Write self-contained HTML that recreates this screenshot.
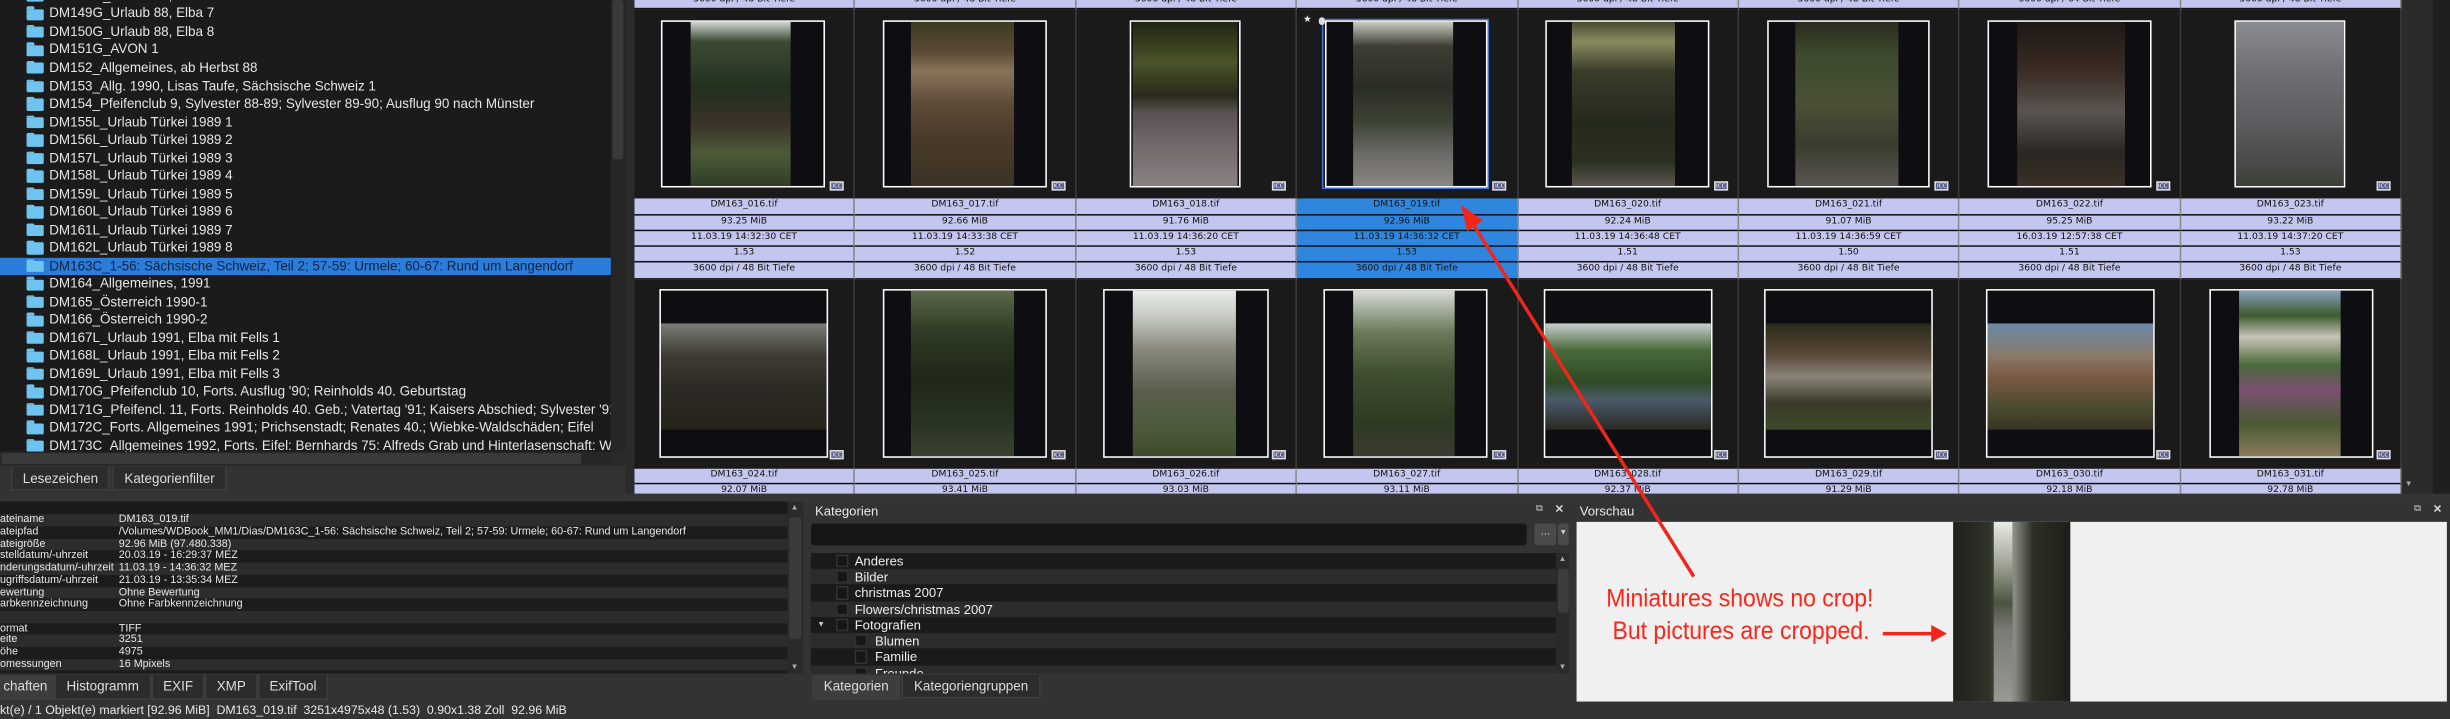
<!DOCTYPE html>
<html><head><meta charset="utf-8">
<style>
html,body{margin:0;padding:0;background:#333;overflow:hidden;width:2450px;height:718px}
#w{position:absolute;left:0;top:0;width:1568px;height:460px;transform:scale(1.5625);transform-origin:0 0;background:#333;font-family:"Liberation Sans",sans-serif;overflow:hidden}
.a{position:absolute}
#tree{left:0;top:0;width:391px;height:289px;background:#1b1b1b;overflow:hidden}
.tr{position:absolute;left:0;width:391px;height:11.5px;color:#e6e6e6;font-size:8.6px;line-height:11.5px;white-space:nowrap}
.tr span{position:absolute;left:31.5px}
.tr i{position:absolute;left:17px;top:2.3px;width:10.5px;height:7.2px;background:#6ec3ef;border-radius:0 1px 1px 1px}
.tr i:before{content:"";position:absolute;left:0;top:-1.3px;width:4.5px;height:1.5px;background:#6ec3ef;border-radius:1px 1px 0 0}
.tr.sel{background:#2b7dd9;color:#0c2345}
.tab{position:absolute;height:15px;background:#2c2c2c;border:1px solid #3e3e3e;border-top:none;color:#ddd;font-size:8.6px;line-height:15px;text-align:center;box-sizing:border-box}
.tab.on{background:#3d3d3d}
#grid{left:406px;top:0;width:1131px;height:315.5px;background:#1a1a1a;overflow:hidden}
.row{position:absolute;left:0;width:1131px;display:flex}
.row div{width:141.375px;box-sizing:border-box;border-right:1px solid #8a8a8a;text-align:center}
.info div{height:10.24px;background:#c3c6ee;border-bottom:1px solid #111;color:#111;font-family:"DejaVu Sans",sans-serif;font-size:5.9px;line-height:9.5px;white-space:nowrap;overflow:hidden}
.info div.s{background:#2f86de}
.th div{height:121px;border-right:1px solid #3a3a3a}
.fr{position:absolute;border:1.3px solid #fff;background:#0e0e12;box-sizing:border-box;overflow:hidden}
.fr b{position:absolute;display:block}
.icc{position:absolute;width:9px;height:6px;background:#5a5e8c;border:0.7px solid #ddd;box-sizing:border-box;color:#fff;font-size:3.6px;line-height:5px;text-align:center;font-family:"DejaVu Sans",sans-serif}
#props{left:0;top:321px;width:504px;height:110px;background:#1c1c1c;overflow:hidden}
.pr{position:absolute;left:0;width:504px;height:7.7px;font-size:6.9px;line-height:7.7px;color:#e8e8e8;white-space:nowrap}
.pr span{position:absolute;left:76px}
.pr.l{background:#2c2c2c}
.sb{position:absolute;background:#2a2a2a}
.cr{position:absolute;left:519px;width:477px;height:10.24px;color:#eee;font-size:8.4px;line-height:10.24px}
.cr.l{background:#2c2c2c}
.cr.d{background:#1a1a1a}
.cb{position:absolute;top:1px;width:8px;height:8.2px;background:#161616;border:0.5px solid #333;box-sizing:border-box}
</style></head><body><div id="w">

<!-- tree -->
<div id="tree" class="a">
<div class="tr" style="top:-8.1px"><i></i><span>DM148G_Urlaub 88, Elba 6</span></div>
<div class="tr" style="top:3.44px"><i></i><span>DM149G_Urlaub 88, Elba 7</span></div>
<div class="tr" style="top:14.96px"><i></i><span>DM150G_Urlaub 88, Elba 8</span></div>
<div class="tr" style="top:26.48px"><i></i><span>DM151G_AVON 1</span></div>
<div class="tr" style="top:38px"><i></i><span>DM152_Allgemeines, ab Herbst 88</span></div>
<div class="tr" style="top:49.52px"><i></i><span>DM153_Allg. 1990, Lisas Taufe, Sächsische Schweiz 1</span></div>
<div class="tr" style="top:61.04px"><i></i><span>DM154_Pfeifenclub 9, Sylvester 88-89; Sylvester 89-90; Ausflug 90 nach Münster</span></div>
<div class="tr" style="top:72.56px"><i></i><span>DM155L_Urlaub Türkei 1989 1</span></div>
<div class="tr" style="top:84.08px"><i></i><span>DM156L_Urlaub Türkei 1989 2</span></div>
<div class="tr" style="top:95.6px"><i></i><span>DM157L_Urlaub Türkei 1989 3</span></div>
<div class="tr" style="top:107.12px"><i></i><span>DM158L_Urlaub Türkei 1989 4</span></div>
<div class="tr" style="top:118.64px"><i></i><span>DM159L_Urlaub Türkei 1989 5</span></div>
<div class="tr" style="top:130.16px"><i></i><span>DM160L_Urlaub Türkei 1989 6</span></div>
<div class="tr" style="top:141.68px"><i></i><span>DM161L_Urlaub Türkei 1989 7</span></div>
<div class="tr" style="top:153.2px"><i></i><span>DM162L_Urlaub Türkei 1989 8</span></div>
<div class="tr sel" style="top:164.72px"><i></i><span>DM163C_1-56: Sächsische Schweiz, Teil 2; 57-59: Urmele; 60-67: Rund um Langendorf</span></div>
<div class="tr" style="top:176.24px"><i></i><span>DM164_Allgemeines, 1991</span></div>
<div class="tr" style="top:187.76px"><i></i><span>DM165_Österreich 1990-1</span></div>
<div class="tr" style="top:199.28px"><i></i><span>DM166_Österreich 1990-2</span></div>
<div class="tr" style="top:210.8px"><i></i><span>DM167L_Urlaub 1991, Elba mit Fells 1</span></div>
<div class="tr" style="top:222.32px"><i></i><span>DM168L_Urlaub 1991, Elba mit Fells 2</span></div>
<div class="tr" style="top:233.84px"><i></i><span>DM169L_Urlaub 1991, Elba mit Fells 3</span></div>
<div class="tr" style="top:245.36px"><i></i><span>DM170G_Pfeifenclub 10, Forts. Ausflug '90; Reinholds 40. Geburtstag</span></div>
<div class="tr" style="top:256.88px"><i></i><span>DM171G_Pfeifencl. 11, Forts. Reinholds 40. Geb.; Vatertag '91; Kaisers Abschied; Sylvester '91</span></div>
<div class="tr" style="top:268.4px"><i></i><span>DM172C_Forts. Allgemeines 1991; Prichsenstadt; Renates 40.; Wiebke-Waldschäden; Eifel</span></div>
<div class="tr" style="top:279.92px"><i></i><span>DM173C_Allgemeines 1992, Forts. Eifel: Bernhards 75: Alfreds Grab und Hinterlasenschaft: Wa</span></div>
</div>
<div class="sb" style="left:391px;top:0;width:9px;height:289px;background:#262626"></div>
<div class="sb" style="left:392px;top:0;width:7px;height:102px;background:#3a3a3a;border-radius:2px"></div>
<div class="sb" style="left:0;top:289px;width:400px;height:9px;background:#262626"></div>
<div class="sb" style="left:1px;top:290px;width:448px;max-width:448px;height:7px;background:#3a3a3a;width:448px"></div>
<div class="sb" style="left:372px;top:289px;width:28px;height:9px;background:#262626"></div>
<div class="a" style="left:391px;top:289px;width:9px;height:9px;background:#2a2a2a"></div>
<div class="a" style="left:400px;top:0;width:6px;height:316px;background:#2b2b2b"></div>
<div class="tab" style="left:7.4px;top:299px;width:62.6px">Lesezeichen</div>
<div class="tab" style="left:72px;top:299px;width:73px">Kategorienfilter</div>

<!-- grid -->
<div id="grid" class="a">
<div class="row info" style="top:-3.84px"><div>3600 dpi / 48 Bit Tiefe</div><div>3600 dpi / 48 Bit Tiefe</div><div>3600 dpi / 48 Bit Tiefe</div><div>3600 dpi / 48 Bit Tiefe</div><div>3600 dpi / 48 Bit Tiefe</div><div>3600 dpi / 48 Bit Tiefe</div><div>3600 dpi / 64 Bit Tiefe</div><div>3600 dpi / 48 Bit Tiefe</div></div>
<div class="row th" style="top:6.4px"><div></div><div></div><div></div><div></div><div></div><div></div><div></div><div></div></div>
<div class="row info" style="top:127.4px"><div>DM163_016.tif</div><div>DM163_017.tif</div><div>DM163_018.tif</div><div class="s">DM163_019.tif</div><div>DM163_020.tif</div><div>DM163_021.tif</div><div>DM163_022.tif</div><div>DM163_023.tif</div></div>
<div class="row info" style="top:137.64px"><div>93.25 MiB</div><div>92.66 MiB</div><div>91.76 MiB</div><div class="s">92.96 MiB</div><div>92.24 MiB</div><div>91.07 MiB</div><div>95.25 MiB</div><div>93.22 MiB</div></div>
<div class="row info" style="top:147.88px"><div>11.03.19 14:32:30 CET</div><div>11.03.19 14:33:38 CET</div><div>11.03.19 14:36:20 CET</div><div class="s">11.03.19 14:36:32 CET</div><div>11.03.19 14:36:48 CET</div><div>11.03.19 14:36:59 CET</div><div>16.03.19 12:57:38 CET</div><div>11.03.19 14:37:20 CET</div></div>
<div class="row info" style="top:158.12px"><div>1.53</div><div>1.52</div><div>1.53</div><div class="s">1.53</div><div>1.51</div><div>1.50</div><div>1.51</div><div>1.53</div></div>
<div class="row info" style="top:168.36px"><div>3600 dpi / 48 Bit Tiefe</div><div>3600 dpi / 48 Bit Tiefe</div><div>3600 dpi / 48 Bit Tiefe</div><div class="s">3600 dpi / 48 Bit Tiefe</div><div>3600 dpi / 48 Bit Tiefe</div><div>3600 dpi / 48 Bit Tiefe</div><div>3600 dpi / 48 Bit Tiefe</div><div>3600 dpi / 48 Bit Tiefe</div></div>
<div class="row th" style="top:178.6px"><div></div><div></div><div></div><div></div><div></div><div></div><div></div><div></div></div>
<div class="row info" style="top:299.6px"><div>DM163_024.tif</div><div>DM163_025.tif</div><div>DM163_026.tif</div><div>DM163_027.tif</div><div>DM163_028.tif</div><div>DM163_029.tif</div><div>DM163_030.tif</div><div>DM163_031.tif</div></div>
<div class="row info" style="top:309.84px"><div>92.07 MiB</div><div>93.41 MiB</div><div>93.03 MiB</div><div>93.11 MiB</div><div>92.37 MiB</div><div>91.29 MiB</div><div>92.18 MiB</div><div>92.78 MiB</div></div>

<!-- row1 thumbs -->
<div class="fr" style="left:17px;top:12.8px;width:105px;height:107px"><b style="left:17%;width:63%;top:0;height:100%;background:linear-gradient(180deg,#cfd6d0 0%,#3c4a34 12%,#22301f 40%,#3a3226 62%,#4d5b3a 80%,#2f3d27 100%)"></b></div>
<div class="fr" style="left:158.5px;top:12.8px;width:105px;height:107px"><b style="left:17%;width:64%;top:0;height:100%;background:linear-gradient(180deg,#3e3a22 0%,#5a4a34 18%,#8a735a 30%,#5d4b38 50%,#4a3a2a 70%,#3b3324 100%)"></b></div>
<div class="fr" style="left:317px;top:12.8px;width:71px;height:107px"><b style="left:2%;width:96%;top:0;height:100%;background:linear-gradient(180deg,#1f2516 0%,#4a5428 25%,#2a2a1c 45%,#5a5250 55%,#70686a 75%,#8a8280 100%)"></b></div>
<div class="a" style="left:440px;top:11.8px;width:107px;height:109.5px;border:1px solid #3f72d2;box-sizing:border-box"></div>
<div class="fr" style="left:441.5px;top:13.3px;width:104px;height:106.5px"><b style="left:17%;width:63%;top:0;height:100%;background:linear-gradient(180deg,#c8ccc0 0%,#3d3d33 15%,#2b2d25 40%,#3a4232 60%,#6a6a66 80%,#8a8682 100%)"></b></div>
<div class="a" style="left:428px;top:8.5px;color:#eee;font-size:6px">★</div>
<div class="a" style="left:437.5px;top:10.5px;width:4.5px;height:5px;border-radius:50%;background:#ddd"></div>
<div class="fr" style="left:583px;top:12.8px;width:105px;height:107px"><b style="left:16%;width:64%;top:0;height:100%;background:linear-gradient(180deg,#4a4a30 0%,#8a8a60 12%,#3a3c2a 30%,#26291d 60%,#2a3020 85%,#5c5650 100%)"></b></div>
<div class="fr" style="left:725px;top:12.8px;width:104px;height:107px"><b style="left:17%;width:64%;top:0;height:100%;background:linear-gradient(180deg,#2a2a1c 0%,#3c4a2e 20%,#4a5036 50%,#3a3c2e 75%,#5a5650 100%)"></b></div>
<div class="fr" style="left:866px;top:12.8px;width:105px;height:107px"><b style="left:17%;width:67%;top:0;height:100%;background:linear-gradient(180deg,#1e1814 0%,#3a2c24 30%,#5a5450 55%,#2a2622 80%,#3a3026 100%)"></b></div>
<div class="fr" style="left:1024px;top:12.8px;width:71px;height:107px"><b style="left:0;width:100%;top:0;height:100%;background:linear-gradient(180deg,#8a8c92 0%,#6e7076 30%,#5c5e60 60%,#4a4c4a 85%,#3a4034 100%)"></b></div>

<!-- row2 thumbs -->
<div class="fr" style="left:16px;top:185px;width:108px;height:107.5px"><b style="left:0;width:100%;top:20%;height:64%;background:linear-gradient(180deg,#7a7c78 0%,#3e3c34 30%,#2c2a24 60%,#26231c 100%)"></b></div>
<div class="fr" style="left:158.5px;top:185px;width:105px;height:107.5px"><b style="left:17%;width:64%;top:0;height:100%;background:linear-gradient(180deg,#5a6a4a 0%,#2e3a24 25%,#202818 55%,#2a3424 80%,#3a4030 100%)"></b></div>
<div class="fr" style="left:300px;top:185px;width:105.5px;height:107.5px"><b style="left:17%;width:64%;top:0;height:100%;background:linear-gradient(180deg,#e8ecea 0%,#c8ccc4 15%,#8a8a7e 35%,#5a5e4c 60%,#4a5a3a 85%,#3a4a2c 100%)"></b></div>
<div class="fr" style="left:441px;top:185px;width:105px;height:107.5px"><b style="left:17%;width:64%;top:0;height:100%;background:linear-gradient(180deg,#d8dcd6 0%,#6a7a5a 25%,#3e4e30 50%,#2e3a22 80%,#3a3a30 100%)"></b></div>
<div class="fr" style="left:582px;top:185px;width:108px;height:107.5px"><b style="left:0;width:100%;top:20%;height:64%;background:linear-gradient(180deg,#cacfcf 0%,#4a6a3a 25%,#2e4a26 55%,#4a5a6a 72%,#2a2a22 100%)"></b></div>
<div class="fr" style="left:723px;top:185px;width:108px;height:107.5px"><b style="left:0;width:100%;top:20%;height:64%;background:linear-gradient(180deg,#2a2a1a 0%,#5a4a3a 30%,#8a8478 50%,#3a3a28 75%,#3e4a2a 100%)"></b></div>
<div class="fr" style="left:865px;top:185px;width:108px;height:107.5px"><b style="left:0;width:100%;top:20%;height:64%;background:linear-gradient(180deg,#6a8aa8 0%,#8a7a6a 30%,#7a5a44 50%,#4a4a30 80%,#3a3424 100%)"></b></div>
<div class="fr" style="left:1008px;top:185px;width:105px;height:107.5px"><b style="left:17%;width:64%;top:0;height:100%;background:linear-gradient(180deg,#8aa0c0 0%,#3e5a2e 15%,#c8c4b8 28%,#4a6a3a 45%,#7a5070 60%,#4a5a34 80%,#8a7a5a 100%)"></b></div>

<!-- ICC badges -->
<div class="icc" style="left:125.3px;top:115.8px">ICC</div><div class="icc" style="left:266.7px;top:115.8px">ICC</div><div class="icc" style="left:408px;top:115.8px">ICC</div><div class="icc" style="left:549.4px;top:115.8px">ICC</div><div class="icc" style="left:690.8px;top:115.8px">ICC</div><div class="icc" style="left:832.2px;top:115.8px">ICC</div><div class="icc" style="left:973.6px;top:115.8px">ICC</div><div class="icc" style="left:1115px;top:115.8px">ICC</div>
<div class="icc" style="left:125.3px;top:287.8px">ICC</div><div class="icc" style="left:266.7px;top:287.8px">ICC</div><div class="icc" style="left:408px;top:287.8px">ICC</div><div class="icc" style="left:549.4px;top:287.8px">ICC</div><div class="icc" style="left:690.8px;top:287.8px">ICC</div><div class="icc" style="left:832.2px;top:287.8px">ICC</div><div class="icc" style="left:973.6px;top:287.8px">ICC</div><div class="icc" style="left:1115px;top:287.8px">ICC</div>
</div>
<div class="a" style="left:1537px;top:0;width:20px;height:316px;background:#2b2b2b"></div>
<div class="a" style="left:1557px;top:0;width:11px;height:316px;background:#1f1f1f"></div>
<div class="a" style="left:1539px;top:307px;width:6px;height:7px;color:#aaa;font-size:5px">▼</div>
<div class="a" style="left:400px;top:315.5px;width:1168px;height:5px;background:#353535"></div>

<!-- properties -->
<div id="props" class="a">
<div class="pr" style="top:0;background:#1a1a1a;height:8.3px"></div>
<div class="pr l" style="top:8.3px">ateiname<span>DM163_019.tif</span></div>
<div class="pr" style="top:16px">ateipfad<span>/Volumes/WDBook_MM1/Dias/DM163C_1-56: Sächsische Schweiz, Teil 2; 57-59: Urmele; 60-67: Rund um Langendorf</span></div>
<div class="pr l" style="top:23.7px">ateigröße<span>92.96 MiB (97.480.338)</span></div>
<div class="pr" style="top:31.4px">stelldatum/-uhrzeit<span>20.03.19 - 16:29:37 MEZ</span></div>
<div class="pr l" style="top:39.1px">nderungsdatum/-uhrzeit<span>11.03.19 - 14:36:32 MEZ</span></div>
<div class="pr" style="top:46.8px">ugriffsdatum/-uhrzeit<span>21.03.19 - 13:35:34 MEZ</span></div>
<div class="pr l" style="top:54.5px">ewertung<span>Ohne Bewertung</span></div>
<div class="pr" style="top:62.2px">arbkennzeichnung<span>Ohne Farbkennzeichnung</span></div>
<div class="pr l" style="top:69.9px"></div>
<div class="pr" style="top:77.6px">ormat<span>TIFF</span></div>
<div class="pr l" style="top:85.3px">eite<span>3251</span></div>
<div class="pr" style="top:93px">öhe<span>4975</span></div>
<div class="pr l" style="top:100.7px">omessungen<span>16 Mpixels</span></div>
<div class="pr" style="top:108.4px">...</div>
</div>
<div class="sb" style="left:504px;top:321px;width:10px;height:110px"></div>
<div class="sb" style="left:505px;top:331px;width:8px;height:78px;background:#3a3a3a;border-radius:2px"></div>
<div class="a" style="left:506px;top:322px;color:#aaa;font-size:5px">▲</div>
<div class="a" style="left:506px;top:424px;color:#aaa;font-size:5px">▼</div>
<div class="tab on" style="left:-2px;top:432px;width:36.5px;height:16px">chaften</div>
<div class="tab" style="left:34.5px;top:432px;width:62.5px;height:16px">Histogramm</div>
<div class="tab" style="left:97px;top:432px;width:34px;height:16px">EXIF</div>
<div class="tab" style="left:131px;top:432px;width:34px;height:16px">XMP</div>
<div class="tab" style="left:165px;top:432px;width:45px;height:16px">ExifTool</div>
<div class="a" style="left:0;top:449px;font-size:7.9px;color:#e8e8e8;white-space:nowrap;line-height:11px">kt(e) / 1 Objekt(e) markiert [92.96 MiB]&nbsp;&nbsp;DM163_019.tif&nbsp;&nbsp;3251x4975x48 (1.53)&nbsp;&nbsp;0.90x1.38 Zoll&nbsp;&nbsp;92.96 MiB</div>

<!-- Kategorien -->
<div class="a" style="left:521.6px;top:322px;color:#e8e8e8;font-size:8.4px;line-height:11px">Kategorien</div>
<div class="a" style="left:983px;top:323px;color:#ccc;font-size:6px">⧉</div>
<div class="a" style="left:995px;top:322px;color:#ddd;font-size:7px;font-weight:bold">✕</div>
<div class="a" style="left:519px;top:334.5px;width:458px;height:14.5px;background:#161616;border-radius:2px"></div>
<div class="a" style="left:982px;top:335px;width:14px;height:14px;background:#4a4a4a;border-radius:2px;color:#ddd;font-size:7px;text-align:center;line-height:12px">...</div>
<div class="a" style="left:997px;top:335px;width:7px;height:14px;background:#4a4a4a;border-radius:2px;color:#ccc;font-size:5px;text-align:center;line-height:12px">▼</div>
<div class="a" style="left:519px;top:354px;width:485px;height:77px;background:#1a1a1a;overflow:hidden">
<div class="cr d" style="left:0;top:0"><div class="cb" style="left:16px"></div><span style="position:absolute;left:28px">Anderes</span></div>
<div class="cr l" style="left:0;top:10.24px"><div class="cb" style="left:16px"></div><span style="position:absolute;left:28px">Bilder</span></div>
<div class="cr d" style="left:0;top:20.48px"><div class="cb" style="left:16px"></div><span style="position:absolute;left:28px">christmas 2007</span></div>
<div class="cr l" style="left:0;top:30.72px"><div class="cb" style="left:16px"></div><span style="position:absolute;left:28px">Flowers/christmas 2007</span></div>
<div class="cr d" style="left:0;top:40.96px"><span style="position:absolute;left:4px;font-size:5px;color:#ccc">▼</span><div class="cb" style="left:16px"></div><span style="position:absolute;left:28px">Fotografien</span></div>
<div class="cr l" style="left:0;top:51.2px"><div class="cb" style="left:28px"></div><span style="position:absolute;left:41px">Blumen</span></div>
<div class="cr d" style="left:0;top:61.44px"><div class="cb" style="left:28px"></div><span style="position:absolute;left:41px">Familie</span></div>
<div class="cr l" style="left:0;top:71.68px"><div class="cb" style="left:28px"></div><span style="position:absolute;left:41px">Freunde</span></div>
</div>
<div class="sb" style="left:996px;top:354px;width:8px;height:77px;background:#2a2a2a"></div>
<div class="sb" style="left:996.5px;top:364px;width:7px;height:28px;background:#3c3c3c;border-radius:2px"></div>
<div class="a" style="left:997.5px;top:355px;color:#aaa;font-size:5px">▲</div>
<div class="a" style="left:997.5px;top:424px;color:#aaa;font-size:5px">▼</div>
<div class="tab on" style="left:520px;top:432px;width:56px;height:16px">Kategorien</div>
<div class="tab" style="left:577px;top:432px;width:89px;height:15px">Kategoriengruppen</div>

<!-- Vorschau -->
<div class="a" style="left:1011px;top:322px;color:#e8e8e8;font-size:8.4px;line-height:11px">Vorschau</div>
<div class="a" style="left:1545px;top:323px;color:#ccc;font-size:6px">⧉</div>
<div class="a" style="left:1557px;top:322px;color:#ddd;font-size:7px;font-weight:bold">✕</div>
<div class="a" style="left:1008.6px;top:334px;width:557px;height:115px;background:#f0f0f0"></div>
<div class="a" style="left:1250px;top:334px;width:75px;height:115px;background:linear-gradient(90deg,#221f1c 0%,#2e3226 30%,#5a6450 45%,#8a8e86 52%,#2c3024 68%,#1e1e1a 100%)"></div>
<div class="a" style="left:1276px;top:334px;width:12px;height:115px;background:linear-gradient(180deg,#e8ece6 0%,#9aa090 25%,#4a5440 45%,#7a7a74 60%,#9a9894 100%)"></div>
<div class="a" style="left:1028px;top:375px;color:#ff2418;font-size:16px;line-height:18px;white-space:nowrap;transform:scaleX(0.92);transform-origin:0 0">Miniatures shows no crop!</div>
<div class="a" style="left:1032px;top:396px;color:#ff2418;font-size:16px;line-height:18px;white-space:nowrap;transform:scaleX(0.92);transform-origin:0 0">But pictures are cropped.</div>

<svg class="a" style="left:0;top:0" width="1568" height="460" viewBox="0 0 1568 460">
<line x1="1084" y1="369" x2="943.5" y2="144.5" stroke="#f0261a" stroke-width="2.2"/>
<polygon points="935,131 949,141 939,148" fill="#f0261a"/>
<line x1="1205" y1="405.5" x2="1237" y2="405.5" stroke="#f0261a" stroke-width="2.2"/>
<polygon points="1246,405.5 1236,400 1236,411" fill="#f0261a"/>
</svg>
</div></body></html>
